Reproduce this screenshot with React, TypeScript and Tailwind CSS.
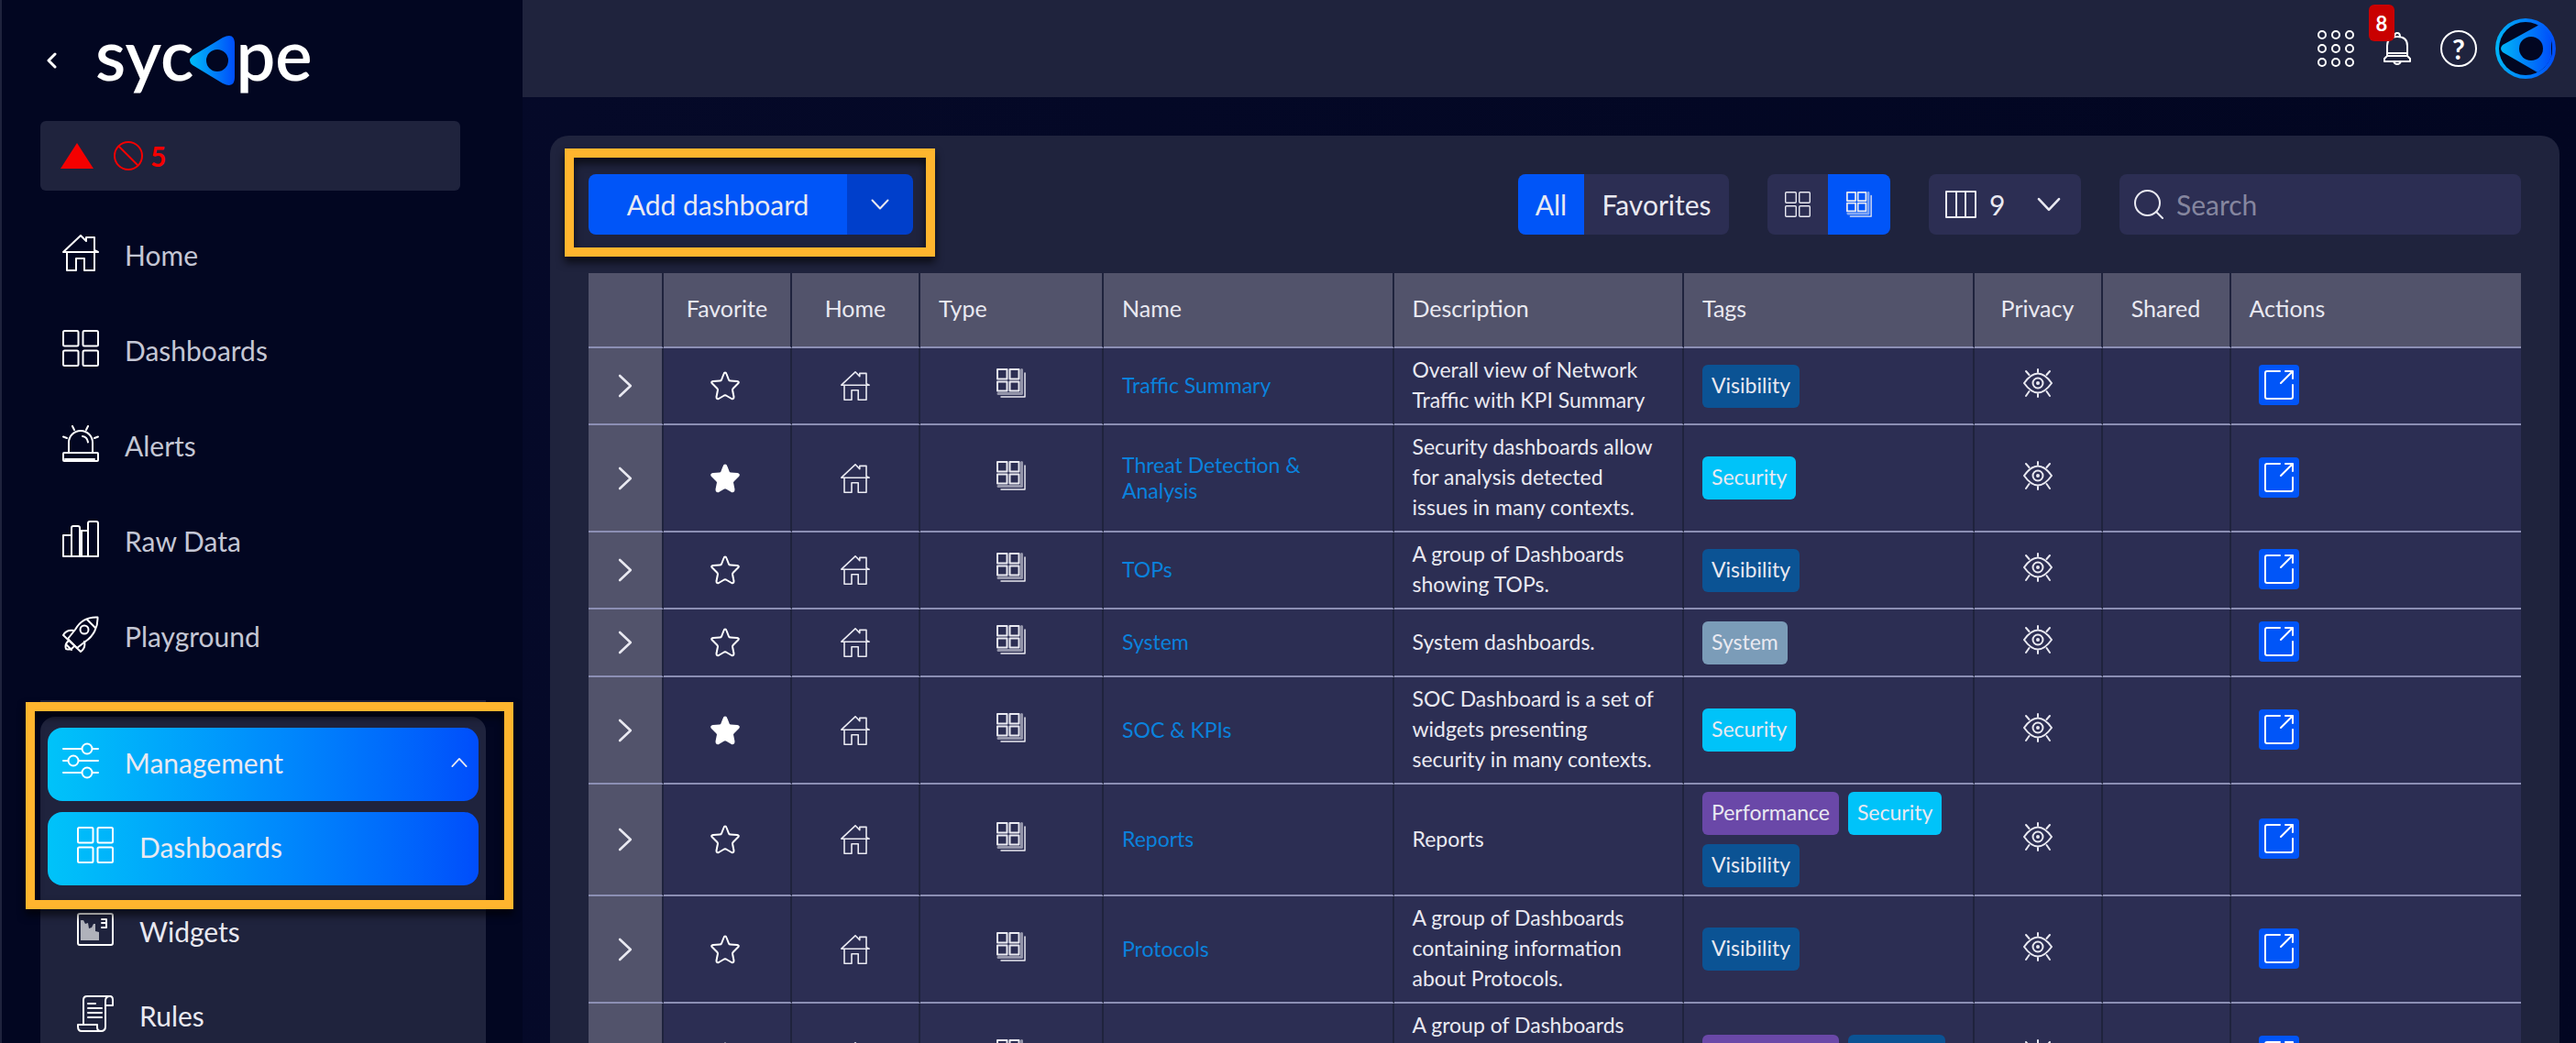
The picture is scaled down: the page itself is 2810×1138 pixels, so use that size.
import type { ReactNode } from "react";

type IconProps = { className?: string };

function Svg({ className, box, children, weight = 2 }: { className?: string; box: string; children: ReactNode; weight?: number }) {
  return (
    <svg
      className={className}
      viewBox={box}
      fill="none"
      stroke="currentColor"
      strokeWidth={weight}
      strokeLinejoin="round"
      strokeLinecap="round"
      aria-hidden="true"
    >
      {children}
    </svg>
  );
}

const HomeIcon = ({ className }: IconProps) => (
  <Svg className={className} box="0 0 40 40">
    <path d="M1 19 20 1l6 6V3h9v14l4 2z" />
    <path d="M5 19v20h10V26h9v13h11V19" />
  </Svg>
);

const GridIcon = ({ className }: IconProps) => (
  <Svg className={className} box="0 0 40 40">
    <rect x="1" y="1" width="16.500" height="16.500" rx="1.500" />
    <rect x="22.500" y="1" width="16.500" height="16.500" rx="1.500" />
    <rect x="1" y="22.500" width="16.500" height="16.500" rx="1.500" />
    <rect x="22.500" y="22.500" width="16.500" height="16.500" rx="1.500" />
  </Svg>
);

const AlertIcon = ({ className }: IconProps) => (
  <Svg className={className} box="0 0 40 40">
    <path d="M7 30V19a13 13 0 0 1 26 0v11" />
    <rect x="1" y="30" width="38" height="9" rx="1" />
    <path d="M3 37h32M22 12c3.500.5 5.500 3 6 6.500M11 1l2 4M28 1l-2 4M1 12.500l4 1.500M39 12.500l-4 1.500" />
  </Svg>
);

const BarsIcon = ({ className }: IconProps) => (
  <Svg className={className} box="0 0 40 40">
    <path d="M1 39V16h9v23M10 39V8q0-2 2-2h5q2 0 2 2v31M19 11h9v28M28 39V3q0-2 2-2h7q2 0 2 2v36zM1 39h38M21 12v26" />
  </Svg>
);

const RocketIcon = ({ className }: IconProps) => (
  <Svg className={className} box="0 0 40 40">
    <path d="M38.500 1.500C28 1 19 6 14 15L6 25l10 10 9-7C34 22 39 12 38.500 1.500zM27 4l9 9" />
    <circle cx="24" cy="15" r="4.500" />
    <path d="M13 16c-6-1-10 1-12 5l19 18c4-3 5-7 4-11M7 27c-4 3-4 6-3 9 3 1 6 1 8-2M4 31l6 6" />
  </Svg>
);

const SlidersIcon = ({ className }: IconProps) => (
  <Svg className={className} box="0 0 40 40">
    <path d="M1 7h20M33 7h6M1 20h5M18 20h21M1 33h20M33 33h6" />
    <circle cx="27" cy="7" r="5.500" />
    <circle cx="12" cy="20" r="5.500" />
    <circle cx="27" cy="33" r="5.500" />
  </Svg>
);

const WidgetIcon = ({ className }: IconProps) => (
  <Svg className={className} box="0 0 40 40">
    <rect x="1" y="3" width="38" height="34" rx="2" />
    <path d="M4 10h3l2 4 3-1 1 6 3-1 2-4h2v8l4 1v9H4z" fill="currentColor" stroke="none" opacity="0.65" />
    <path d="M27 9h5v9M27 13h5M27 18h5" />
  </Svg>
);

const RulesIcon = ({ className }: IconProps) => (
  <Svg className={className} box="0 0 40 40">
    <path d="M7 31V5q0-4 4-4h25q-5 0-5 5v28q0 5-5 5H5q-4 0-4-5v-2h21v3q0 4 4 4" />
    <path d="M36 1q3 0 3 4v6h-8M12 9h8M12 14h15M12 19h15M12 24h15" />
  </Svg>
);

const StackIcon = ({ className }: IconProps) => (
  <Svg className={className} box="0 0 32 32">
    <rect x="1" y="1" width="10.500" height="10.500" />
    <rect x="14.500" y="1" width="10" height="10.500" />
    <rect x="1" y="14.500" width="10.500" height="10" />
    <rect x="14.500" y="14.500" width="10" height="10" />
    <path d="M27.500 1.500v26H2" strokeWidth="3" opacity="0.55" />
    <path d="M31 5v26H5" strokeWidth="1.500" />
  </Svg>
);

const StarIcon = ({ className, filled }: IconProps & { filled: boolean }) => (
  <svg
    className={className}
    viewBox="0 0 32 32"
    fill={filled ? "currentColor" : "none"}
    stroke="currentColor"
    strokeWidth="2"
    strokeLinejoin="round"
    aria-hidden="true"
  >
    <path d="M16 1.500q1 0 1.500 1.500l2.500 6.500q.5 1 2 1l7 .5q3 .5 1 2.500l-5 5q-1 1-1 2l1.500 7.500q0 3-2.500 2L17 26.500q-1-.5-2 0L9 30q-2.500 1-2.500-2L8 20.500q0-1-1-2l-5-5q-2-2 1-2.500l7-.5q1.500 0 2-1L14.500 3Q15 1.500 16 1.500z" />
  </svg>
);

const EyeIcon = ({ className }: IconProps) => (
  <Svg className={className} box="0 0 32 32">
    <path d="M1 16q15-21 30 0-15 21-30 0z" />
    <circle cx="16" cy="16" r="5.500" />
    <circle cx="16" cy="16" r="1" />
    <path d="M16 1v3M16 28v3M3 3l3.500 4M29 3l-3.500 4M3 30l3.500-5M29 30l-3.500-5" />
  </Svg>
);

const OpenIcon = ({ className }: IconProps) => (
  <Svg className={className} box="0 0 32 32">
    <path d="M17 1H3Q1 1 1 3v26q0 2 2 2h26q2 0 2-2V16M23 1h8v8M31 1 18 14" />
  </Svg>
);

const Chevron = ({ className }: IconProps) => (
  <Svg className={className} box="0 0 20 12">
    <path d="m1.500 1.500 8.500 9 8.500-9" />
  </Svg>
);

const LensMark = ({ className }: IconProps) => (
  <svg className={className} viewBox="0 0 50 54" aria-hidden="true">
    <defs>
      <linearGradient id="lens" x1="0" x2="1" y1="0" y2="0">
        <stop offset="0" stopColor="#00bdf7" />
        <stop offset="1" stopColor="#004dfb" />
      </linearGradient>
    </defs>
    <path
      fill="url(#lens)"
      fillRule="evenodd"
      d="M3 22 36 2q13-6 13 7v36q0 13-13 7L3 32q-6-5 0-10zM30 15a12 12 0 1 0 0 24 12 12 0 0 0 0-24z"
    />
  </svg>
);

const navItems = [
  { label: "Home", Icon: HomeIcon },
  { label: "Dashboards", Icon: GridIcon },
  { label: "Alerts", Icon: AlertIcon },
  { label: "Raw Data", Icon: BarsIcon },
  { label: "Playground", Icon: RocketIcon },
];

const tagStyles = {
  Visibility: "bg-[#0b5394]",
  Security: "bg-[#00c3f9]",
  System: "bg-[#7b9cb8]",
  Performance: "bg-[#6a48a8]",
};
type Tag = keyof typeof tagStyles;

type Row = { name: string; description: string; tags: Tag[]; favorite?: boolean };

const rows: Row[] = [
  { name: "Traffic Summary", description: "Overall view of Network Traffic with KPI Summary", tags: ["Visibility"] },
  {
    name: "Threat Detection & Analysis",
    description: "Security dashboards allow for analysis detected issues in many contexts.",
    tags: ["Security"],
    favorite: true,
  },
  { name: "TOPs", description: "A group of Dashboards showing TOPs.", tags: ["Visibility"] },
  { name: "System", description: "System dashboards.", tags: ["System"] },
  {
    name: "SOC & KPIs",
    description: "SOC Dashboard is a set of widgets presenting security in many contexts.",
    tags: ["Security"],
    favorite: true,
  },
  { name: "Reports", description: "Reports", tags: ["Performance", "Security", "Visibility"] },
  { name: "Protocols", description: "A group of Dashboards containing information about Protocols.", tags: ["Visibility"] },
  {
    name: "Performance",
    description: "A group of Dashboards containing information about Performance.",
    tags: ["Performance", "Visibility"],
  },
];

const columns = [
  { label: "", width: "w-[82px]", align: "text-center" },
  { label: "Favorite", width: "w-[140px]", align: "text-center" },
  { label: "Home", width: "w-[140px]", align: "text-center" },
  { label: "Type", width: "w-[200px]", align: "px-5 text-left" },
  { label: "Name", width: "", align: "px-5 text-left" },
  { label: "Description", width: "", align: "px-5 text-left" },
  { label: "Tags", width: "", align: "px-5 text-left" },
  { label: "Privacy", width: "w-[140px]", align: "text-center" },
  { label: "Shared", width: "w-[140px]", align: "text-center" },
  { label: "Actions", width: "", align: "px-5 text-left" },
];

const calloutStyle =
  "pointer-events-none absolute z-10 border-10 border-[#ffb52e] drop-shadow-[0_6px_5px_rgba(0,0,0,0.7)]";

function Sidebar() {
  return (
    <aside className="flex w-[570px] shrink-0 flex-col overflow-hidden border-l-2 border-[#1f233d] bg-[#020621]">
      <div className="flex h-[132px] shrink-0 items-center pl-[44px]">
        <button type="button" aria-label="Collapse menu" className="flex size-5 items-center justify-center text-white">
          <Svg className="h-[18px] w-3" box="0 0 12 18" weight={3}>
            <path d="M10 2 3 9l7 7" />
          </Svg>
        </button>
        <a href="#home" aria-label="sycope" className="ml-[38px] flex items-center pb-3.5 text-[76px] leading-[88px] text-white">
          <span className="font-semibold">syc</span>
          <LensMark className="mt-3.5 -ml-1 h-[54px] w-[50px]" />
          <span className="font-semibold">pe</span>
        </a>
      </div>

      <div className="mr-[68px] ml-[42px] flex h-[76px] shrink-0 items-center rounded-md bg-[#1f233d] pl-[22px] text-[#f50000]">
        <svg className="h-7 w-9" viewBox="0 0 36 28" fill="currentColor" aria-hidden="true">
          <path d="M18 0 36 28H0z" />
        </svg>
        <Svg className="ml-[22px] size-8" box="0 0 32 32">
          <circle cx="16" cy="16" r="15" />
          <path d="m5.500 5.500 21 21" />
        </Svg>
        <span className="ml-2 text-[30px] font-bold">5</span>
      </div>

      <nav className="mt-5 flex shrink-0 flex-col text-[30px] text-[#c4c6d4]">
        {navItems.map(({ label, Icon }) => (
          <a key={label} href={`#${label}`} className="flex h-[104px] items-center gap-7 pb-1 pl-[66px]">
            <Icon className="mb-1 size-10 text-white" />
            {label}
          </a>
        ))}

        <div className="mt-4 mr-10 ml-[42px] border-t-2 border-[#1f233d] pt-4">
          <div className="rounded-t-2xl bg-[#1f233d] px-2 pt-3 pb-20 text-[#e9e9f1]">
            <div className="relative flex flex-col gap-3">
              <button
                type="button"
                aria-expanded="true"
                className="flex h-20 items-center gap-7 rounded-2xl bg-linear-to-r from-[#00c3f9] to-[#004dfb] pr-2 pb-1 pl-4"
              >
                <SlidersIcon className="mb-1 size-10 text-white" />
                Management
                <Chevron className="mr-1 ml-auto h-3 w-[18px] rotate-180" />
              </button>
              <a
                href="#management-dashboards"
                className="flex h-20 items-center gap-7 rounded-2xl bg-linear-to-r from-[#00c3f9] to-[#004dfb] pb-1 pl-8"
              >
                <GridIcon className="mb-1 size-10 text-white" />
                Dashboards
              </a>
              <span className={`${calloutStyle} -top-7 -right-[38px] -bottom-[26px] -left-6`} />
            </div>
            <a href="#widgets" className="mt-3 flex h-20 items-center gap-7 pb-1 pl-8">
              <WidgetIcon className="mb-1 size-10 text-white" />
              Widgets
            </a>
            <a href="#rules" className="mt-3 flex h-20 items-center gap-7 pb-1 pl-8">
              <RulesIcon className="mb-1 size-10 text-white" />
              Rules
            </a>
          </div>
        </div>
      </nav>
    </aside>
  );
}

function TopBar() {
  return (
    <header className="flex h-[106px] shrink-0 items-center justify-end bg-[#1f233d] pr-[22px] text-white">
      <button type="button" aria-label="Applications">
        <Svg className="size-10" box="0 0 40 40">
          {[5, 20, 35].map((y) => [5, 20, 35].map((x) => <circle key={`${x}-${y}`} cx={x} cy={y} r="4" />))}
        </Svg>
      </button>
      <button type="button" aria-label="Notifications, 8 new" className="relative ml-8">
        <Svg className="h-9 w-[30px]" box="0 0 30 36">
          <path d="M4 23V15q0-10 11-10t11 10v8M4 23h22M4 26h22M4 23v3l-3 3v3h28v-3l-3-3v-3M12 5q0-4 3-4t3 4M11 32q1 3 4 3t4-3" />
        </Svg>
        <span className="absolute -top-[30px] -left-4 flex h-10 w-7 items-center justify-center rounded-md bg-[#c90000] text-[22px] font-bold">
          8
        </span>
      </button>
      <button
        type="button"
        aria-label="Help"
        className="ml-8 flex size-10 items-center justify-center rounded-full border-2 border-white text-[30px] leading-9 font-bold"
      >
        ?
      </button>
      <button type="button" aria-label="Account" className="ml-5">
        <svg className="size-[66px]" viewBox="0 0 66 66" aria-hidden="true">
          <defs>
            <linearGradient id="ring" x1="0" x2="1" y1="0" y2="0">
              <stop offset="0" stopColor="#00b4f7" />
              <stop offset="1" stopColor="#004dfb" />
            </linearGradient>
          </defs>
          <circle cx="33" cy="33" r="33" fill="url(#ring)" />
          <circle cx="33" cy="33" r="29" fill="#020621" />
          <path d="M8 29 48 7q14 9 14 26T46 59L8 37q-4-4 0-8z" fill="url(#ring)" />
          <circle cx="39" cy="33" r="13" fill="#020621" />
          <path d="M61 24q2 9 0 18z" fill="#020621" />
        </svg>
      </button>
    </header>
  );
}

function Toolbar() {
  return (
    <div className="flex h-[66px] items-stretch gap-[42px] text-[30px] text-[#e9e9f1]">
      <div className="relative mr-auto flex">
        <button type="button" className="w-[282px] rounded-l-lg bg-[#0055f8]">
          Add dashboard
        </button>
        <button type="button" aria-label="More options" className="flex w-[72px] items-center justify-center rounded-r-lg bg-[#003fcb]">
          <Chevron className="h-3 w-5" />
        </button>
        <span className={`${calloutStyle} -top-7 -right-6 -bottom-6 -left-[26px]`} />
      </div>

      <div className="flex overflow-hidden rounded-lg bg-[#2c2e53]">
        <button type="button" aria-pressed="true" className="w-[72px] bg-[#0055f8]">
          All
        </button>
        <button type="button" aria-pressed="false" className="w-[158px]">
          Favorites
        </button>
      </div>

      <div className="flex overflow-hidden rounded-lg bg-[#2c2e53]">
        <button type="button" aria-label="Tile view" className="flex w-[66px] items-center justify-center">
          <GridIcon className="size-7" />
        </button>
        <button type="button" aria-label="List view" className="flex w-[68px] items-center justify-center bg-[#0055f8]">
          <StackIcon className="size-7" />
        </button>
      </div>

      <button type="button" aria-haspopup="listbox" className="flex w-[166px] items-center rounded-lg bg-[#2c2e53] pr-[22px] pl-[18px]">
        <Svg className="h-[30px] w-[34px]" box="0 0 34 30">
          <path d="M1 1h32v28H1zM12 1v28M22 1v28" />
        </Svg>
        <span className="ml-3.5">9</span>
        <Chevron className="ml-auto h-4 w-[26px]" />
      </button>

      <label className="flex w-[438px] items-center rounded-lg bg-[#2c2e53] pl-4">
        <Svg className="size-8" box="0 0 32 32">
          <circle cx="14.500" cy="14.500" r="13.500" />
          <path d="m24 24 7 7" />
        </Svg>
        <input
          type="search"
          aria-label="Search"
          placeholder="Search"
          className="ml-3.5 min-w-0 flex-1 bg-transparent outline-none placeholder:text-[#85869f]"
        />
      </label>
    </div>
  );
}

function DashboardTable() {
  const cell = "border-r-2 border-b-2 border-r-[#1f233d] border-b-[#8c8fb4] last:border-r-0";
  return (
    <table className="mt-[42px] w-full table-fixed border-separate border-spacing-0 text-[23px] text-[#e9e9f1]">
      <colgroup>
        {columns.map((c) => (
          <col key={c.label} className={c.width} />
        ))}
      </colgroup>
      <thead>
        <tr>
          {columns.map((c) => (
            <th key={c.label} scope="col" className={`h-[82px] bg-[#52536b] pb-0.5 text-[25px] font-normal ${cell} ${c.align}`}>
              {c.label}
            </th>
          ))}
        </tr>
      </thead>
      <tbody>
        {rows.map((row) => (
          <tr key={row.name} className="h-[74px] bg-[#2c2e53]">
            <td className={`bg-[#52536b] ${cell}`}>
              <button type="button" aria-label={`Expand ${row.name}`} className="mx-auto flex size-8 items-center justify-center">
                <Chevron className="h-4 w-[26px] -rotate-90" />
              </button>
            </td>
            <td className={cell}>
              <button type="button" aria-label="Favorite" aria-pressed={!!row.favorite} className="mx-auto block pr-1 text-white">
                <StarIcon className="size-8" filled={!!row.favorite} />
              </button>
            </td>
            <td className={cell}>
              <button type="button" aria-label="Set as home" className="mx-auto block">
                <HomeIcon className="size-8" />
              </button>
            </td>
            <td className={cell}>
              <StackIcon className="mx-auto mb-1.5 size-8" />
            </td>
            <td className={`px-5 pb-0.5 leading-7 text-[#0a82dd] ${cell}`}>
              <a href={`#${row.name}`}>{row.name}</a>
            </td>
            <td className={`pt-[7px] pr-6 pb-[9px] pl-5 leading-[33px] ${cell}`}>{row.description}</td>
            <td className={`px-5 py-2 ${cell}`}>
              <div className="flex flex-wrap gap-2.5">
                {row.tags.map((tag) => (
                  <span key={tag} className={`flex h-[47px] items-center rounded-md px-2.5 pb-0.5 ${tagStyles[tag]}`}>
                    {tag}
                  </span>
                ))}
              </div>
            </td>
            <td className={cell}>
              <EyeIcon className="mx-auto mb-1.5 size-8" />
            </td>
            <td className={cell} />
            <td className={`px-[30px] ${cell}`}>
              <button type="button" aria-label={`Open ${row.name}`} className="mb-0.5 flex size-11 items-center justify-center rounded bg-[#0055f8] text-white">
                <OpenIcon className="size-8" />
              </button>
            </td>
          </tr>
        ))}
      </tbody>
    </table>
  );
}

export default function App() {
  return (
    <div className="flex h-screen overflow-hidden bg-linear-to-r from-[#060a2a] to-[#020621] font-['Lato',sans-serif]">
      <Sidebar />
      <div className="flex min-w-0 flex-1 flex-col">
        <TopBar />
        <main className="mt-[42px] mr-[18px] ml-[30px] flex-1 rounded-t-[20px] bg-[#1f233d] p-[42px]">
          <Toolbar />
          <DashboardTable />
        </main>
      </div>
    </div>
  );
}
